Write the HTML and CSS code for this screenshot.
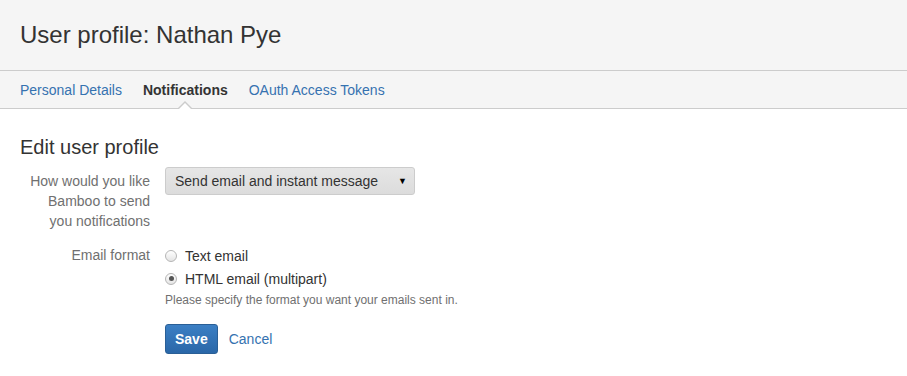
FILE: index.html
```html
<!DOCTYPE html>
<html lang="en">
<head>
  <meta charset="UTF-8">
  <title>User profile: Nathan Pye</title>
  <link rel="stylesheet" href="styles.css">
</head>
<body>
  <header class="page-header">
    <h1>User profile: Nathan Pye</h1>
  </header>

  <nav class="tabs">
    <a href="#details">Personal Details</a>
    <a href="#notifications" class="active">Notifications</a>
    <a href="#tokens">OAuth Access Tokens</a>
  </nav>

  <section class="content">
    <h2>Edit user profile</h2>
    <form class="profile-form">
      <div class="field">
        <label class="field-label">How would you like Bamboo to send you notifications</label>
        <div class="field-body">
          <div class="select">
            <span>Send email and instant message</span>
            <span class="arrow">&#9660;</span>
          </div>
        </div>
      </div>

      <div class="field">
        <label class="field-label email-label">Email format</label>
        <div class="field-body">
          <div class="radio"><span class="radio-dot"></span>Text email</div>
          <div class="radio"><span class="radio-dot checked"></span>HTML email (multipart)</div>
          <div class="help">Please specify the format you want your emails sent in.</div>
        </div>
      </div>

      <div class="field">
        <div class="field-label"></div>
        <div class="field-body buttons">
          <button type="button" class="btn-save">Save</button>
          <a href="#" class="cancel">Cancel</a>
        </div>
      </div>
    </form>
  </section>
</body>
</html>
```

FILE: styles.css
```css
body {
  margin: 0;
  font-family: "Liberation Sans", Arial, sans-serif;
  font-size: 14px;
  color: #333;
  background: #fff;
}

a {
  color: #3572b0;
  text-decoration: none;
}

.page-header {
  background: #f5f5f5;
  border-bottom: 1px solid #ccc;
  height: 71px;
  box-sizing: border-box;
  padding: 0 20px;
  display: flex;
  align-items: center;
}

.page-header h1 {
  margin: 0;
  font-size: 24px;
  font-weight: normal;
  line-height: 30px;
  color: #333;
}

.tabs {
  background: #f5f5f5;
  border-bottom: 1px solid #ccc;
  height: 38px;
  box-sizing: border-box;
  padding: 0 20px;
  display: flex;
  align-items: center;
  gap: 21px;
}

.tabs a {
  position: relative;
  line-height: 20px;
}

.tabs a.active {
  color: #333;
  font-weight: bold;
}

.tabs a.active::before,
.tabs a.active::after {
  content: "";
  position: absolute;
  left: 50%;
  width: 0;
  height: 0;
  border-style: solid;
  border-color: transparent;
}

.tabs a.active::before {
  margin-left: -8px;
  bottom: -9px;
  border-width: 0 8px 8px;
  border-bottom-color: #ccc;
}

.tabs a.active::after {
  margin-left: -7px;
  bottom: -10px;
  border-width: 0 7px 7px;
  border-bottom-color: #fff;
}

.content {
  padding: 26px 20px 10px;
}

.content h2 {
  margin: 0 0 7px;
  font-size: 20px;
  font-weight: normal;
  line-height: 25px;
  color: #333;
}

.field {
  display: flex;
  gap: 15px;
  margin-bottom: 13px;
}

.field-label {
  width: 122px;
  padding-left: 8px;
  flex: none;
  text-align: right;
  color: #707070;
  line-height: 20px;
  padding-top: 4px;
}

.field-label.email-label {
  padding-top: 1px;
}

.select {
  width: 250px;
  height: 28px;
  box-sizing: border-box;
  border: 1px solid #ccc;
  border-radius: 3px;
  background: linear-gradient(#e6e6e6, #dcdcdc);
  display: flex;
  align-items: center;
  justify-content: space-between;
  padding: 0 7px 0 9px;
  font-size: 14px;
  color: #333;
}

.select .arrow {
  font-size: 9px;
  color: #000;
}

.radio {
  display: flex;
  align-items: center;
  height: 23px;
  color: #333;
}

.radio-dot {
  width: 10px;
  height: 10px;
  border: 1px solid #b5b5b5;
  border-radius: 50%;
  background: linear-gradient(#fff, #e4e4e4);
  margin-right: 8px;
  position: relative;
}

.radio-dot.checked::after {
  content: "";
  position: absolute;
  left: 2.5px;
  top: 2.5px;
  width: 5px;
  height: 5px;
  border-radius: 50%;
  background: #555;
}

.help {
  font-size: 12px;
  color: #707070;
  margin-top: 3px;
  line-height: 14px;
}

.buttons {
  display: flex;
  align-items: center;
  gap: 11px;
  margin-top: 4px;
}

.btn-save {
  font-family: inherit;
  font-size: 14px;
  font-weight: bold;
  color: #fff;
  height: 30px;
  padding: 0 9px;
  border: 1px solid #2a5f96;
  border-radius: 3px;
  background: linear-gradient(#3b7fc4, #2a67a8);
}
```
